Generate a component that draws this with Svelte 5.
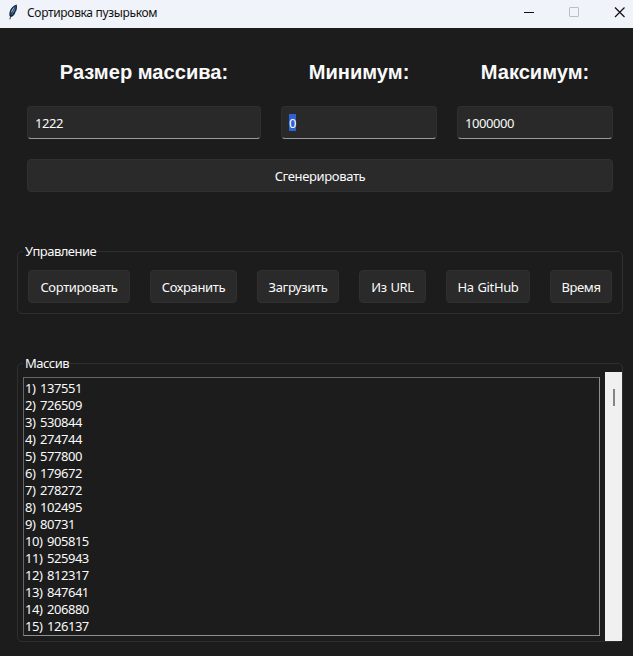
<script>
  const fields = [
    { label: 'Размер массива:', value: '1222', width: 234 },
    { label: 'Минимум:', value: '0', width: 156, selected: true },
    { label: 'Максимум:', value: '1000000', width: 156 }
  ];
  const actions = [
    { text: 'Сортировать', width: 102 },
    { text: 'Сохранить', width: 87 },
    { text: 'Загрузить', width: 82 },
    { text: 'Из URL', width: 67 },
    { text: 'На GitHub', width: 84 },
    { text: 'Время', width: 62 }
  ];
  const items = [137551, 726509, 530844, 274744, 577800, 179672, 278272, 102495,
    80731, 905815, 525943, 812317, 847641, 206880, 126137];
</script>

<div class="window">
  <header>
    <svg class="feather" width="12" height="18" viewBox="0 0 12 18">
      <path d="M1.500 12C.8 7 3.700 2 8.600.6c.7 2 .5 4.500-.5 6.700l-1 .6.4.6C6.700 10.800 4.800 12.500 3 13z" fill="#1b2434" />
      <path d="M2.600 10.500C2.700 6.500 4.800 3.500 7.800 1.800c0 2-.5 3.900-1.500 5.800L3.700 11.500z" fill="#4a7fbc" />
      <path d="M7.500 2.500C5 6 3.300 9 1.900 15.300" stroke="#172033" stroke-width=".9" fill="none" />
      <path d="M5.600 4.200L3.500 8" stroke="#a9cbe8" stroke-width=".9" />
    </svg>
    <span class="title">Сортировка пузырьком</span>
    <svg class="controls" width="110" height="28" viewBox="0 0 110 28" fill="none">
      <path d="M1 12.500H11" stroke="#111" />
      <rect x="46.500" y="7.500" width="9" height="9" rx=".5" stroke="#bcbec6" />
      <path d="M92 7.500L101.500 17M101.500 7.500L92 17" stroke="#111" stroke-width="1.200" />
    </svg>
  </header>

  <main>
    <section class="fields">
      {#each fields as f}
        <div class="field" style="width: {f.width}px">
          <h2>{f.label}</h2>
          <div class="entry"><span class:selected={f.selected}>{f.value}</span></div>
        </div>
      {/each}
    </section>
    <button class="generate">Сгенерировать</button>

    <section class="group control">
      <span class="legend">Управление</span>
      {#each actions as a}
        <button style="width: {a.width}px">{a.text}</button>
      {/each}
    </section>

    <section class="group array">
      <span class="legend">Массив</span>
      <div class="list">
        {#each items as n, i}
          <div class="row">{i + 1}) {n}</div>
        {/each}
      </div>
      <div class="scroll"><div class="thumb"></div></div>
    </section>
  </main>
</div>

<style>
  .window {
    width: 633px;
    height: 656px;
    box-sizing: border-box;
    overflow: hidden;
    background: #1c1c1c;
    color: #fafafa;
    font: 13px/17px 'Noto Sans', sans-serif;
    letter-spacing: -0.36px;
  }
  header {
    display: flex;
    align-items: flex-start;
    height: 28px;
    background: #f0f3fa;
    color: #111;
  }
  .feather { margin: 4px 0 0 8px; }
  .title {
    margin: 4px auto 0 7px;
    font-size: 12px;
    letter-spacing: -0.33px;
  }
  main { display: flex; flex-direction: column; }
  .fields {
    display: flex;
    gap: 20px;
    padding: 0 20px 0 27px;
  }
  h2 {
    margin: 32px 0 22px;
    font: bold 20.1px/24px 'Liberation Sans', Arial, sans-serif;
    letter-spacing: 0;
    text-align: center;
    white-space: nowrap;
  }
  .entry {
    box-sizing: border-box;
    height: 33px;
    padding: 8px 7px;
    background: #292929;
    border: 1px solid #2f2f2f;
    border-bottom-color: #9a9a9a;
    border-radius: 4px;
    letter-spacing: -0.44px;
  }
  .entry span { display: inline-block; height: 17px; line-height: 17px; }
  .entry .selected {
    height: 17px;
    margin-top: -1px;
    background: #2f60d8;
    line-height: 19px;
  }
  button {
    box-sizing: border-box;
    height: 33px;
    margin: 0;
    padding: 1px 0 0;
    background: #2a2a2a;
    border: 1px solid #303030;
    border-radius: 4px;
    color: #fafafa;
    font: inherit;
    letter-spacing: inherit;
    word-spacing: 0.8px;
    white-space: nowrap;
  }
  .generate { width: 586px; margin: 20px 0 0 27px; }
  .group {
    position: relative;
    display: flex;
    box-sizing: border-box;
    width: 606px;
    margin-left: 17px;
    border: 1px solid #2f2f2f;
    border-radius: 5px;
  }
  .legend {
    position: absolute;
    left: 5px;
    top: -9px;
    padding: 0 0 0 2px;
    background: #1c1c1c;
    letter-spacing: -0.5px;
  }
  .control { height: 63px; margin-top: 59px; padding: 18px 10px; gap: 20px; }
  .array { height: 279px; margin-top: 49px; padding: 13px 0 0 5px; }
  .list {
    box-sizing: border-box;
    width: 577px;
    height: 259px;
    padding: 2px 1px;
    border: 1px solid #8e8e8e;
    border-top-color: #666;
    border-left-color: #666;
    letter-spacing: -0.44px;
    word-spacing: 1.5px;
  }
  .row { height: 17px; }
  .scroll {
    width: 17px;
    height: 269px;
    margin: -5px 0 0 5px;
    background: #f0f0f0;
  }
  .thumb {
    width: 2px;
    height: 17px;
    margin: 17px 0 0 8px;
    background: #858585;
  }
</style>
